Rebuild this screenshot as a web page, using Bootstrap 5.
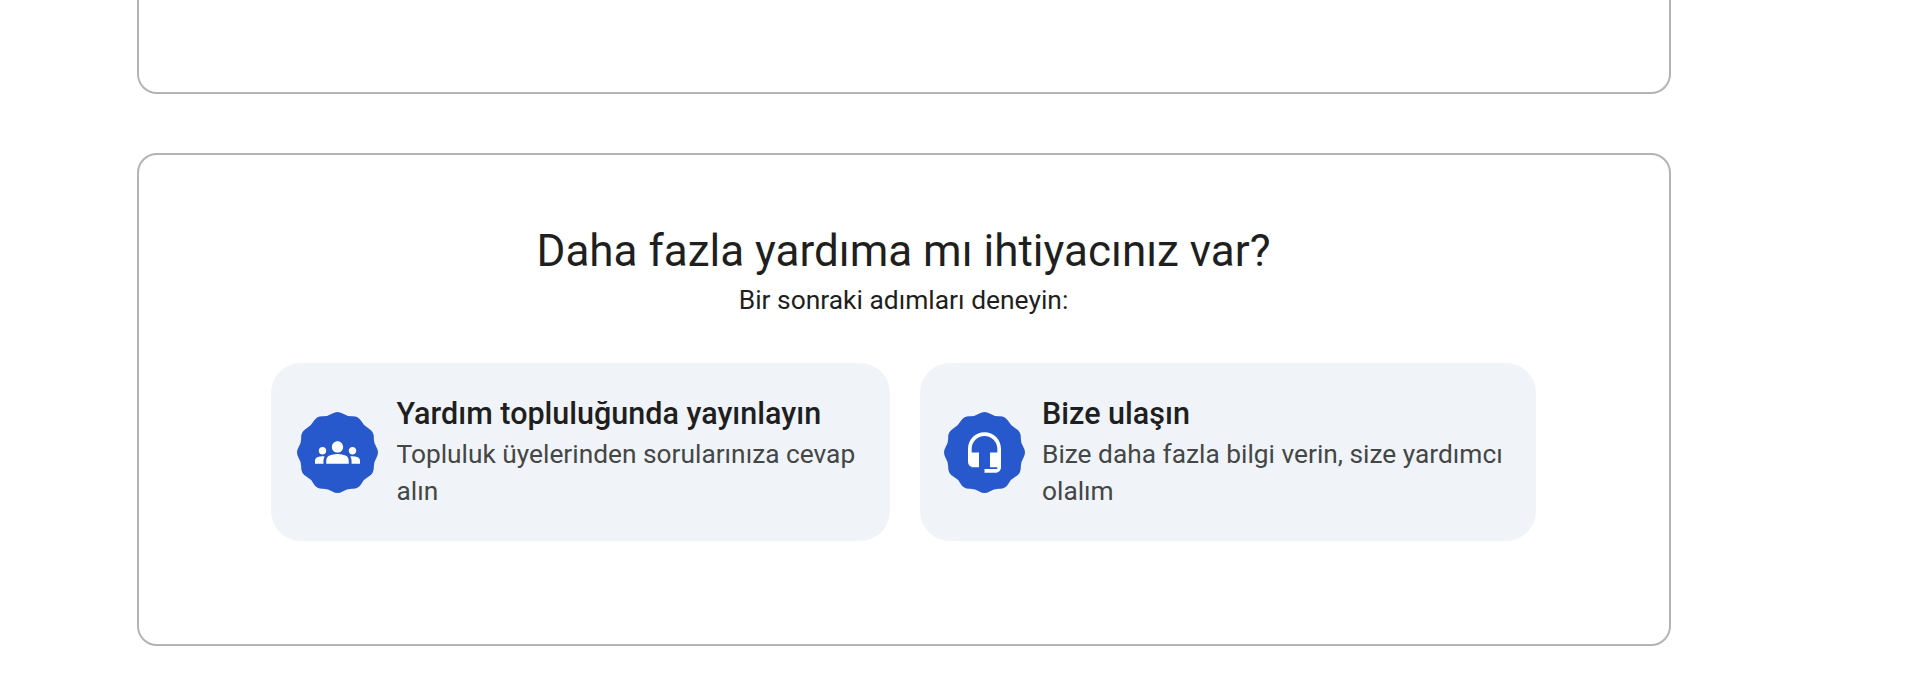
<!DOCTYPE html>
<html lang="tr">
<head>
  <meta charset="UTF-8" />
  <meta name="viewport" content="width=device-width, initial-scale=1" />
  <title>Daha fazla yardıma mı ihtiyacınız var?</title>
  <link href="https://cdn.jsdelivr.net/npm/bootstrap@5.3.0/dist/css/bootstrap.min.css" rel="stylesheet" />
  <style>
    body { background: #fff; font-family: Roboto, "Noto Sans", sans-serif; color: #1f1f1f; overflow: hidden; }
    .page-wrap { width: 1534px; margin-left: 137px; }
    .box-outline { border: 2px solid #b4b4b4; border-radius: 20px; background: #fff; }
    .box-cut { height: 94px; border-top: 0; border-top-left-radius: 0; border-top-right-radius: 0; margin-bottom: 59px; }
    .box-help { height: 493px; padding: 66px 133px 0 132px; }
    .help-title { font-size: 44px; font-weight: 400; line-height: 60px; margin: 0; }
    .help-sub { font-size: 26.4px; font-weight: 400; line-height: 36px; margin: 1px 0 45px; }
    .help-row { gap: 30px; }
    .help-tile { flex: 1 1 0; height: 178px; background: #f0f4f9; border-radius: 30px; padding: 0 20px 0 26px; gap: 18.5px; color: inherit; text-decoration: none; }
    .help-tile-alt { padding-left: 24px; gap: 17.5px; }
    .tile-badge { width: 81px; height: 81px; flex: none; }
    .tile-text { padding-top: 2px; }
    .tile-title { font-size: 30.5px; font-weight: 500; line-height: 36px; margin: 0 0 4px; }
    .tile-desc { font-size: 26.3px; font-weight: 400; line-height: 37px; margin: 0; color: #444746; }
  </style>
</head>
<body>
  <svg width="0" height="0" class="position-absolute">
    <defs>
      <!-- scalloped badge, 12 lobes -->
      <symbol id="badge-shape" viewBox="0 0 81 81">
        <path fill="#2759cd" d="M35.37 1.54Q40.5 -1.5 45.63 1.54Q50.15 4.47 55.54 4.19Q61.5 4.13 64.42 9.32Q66.88 14.12 71.68 16.58Q76.87 19.5 76.81 25.46Q76.53 30.85 79.46 35.37Q82.5 40.5 79.46 45.63Q76.53 50.15 76.81 55.54Q76.87 61.5 71.68 64.42Q66.88 66.88 64.42 71.68Q61.5 76.87 55.54 76.81Q50.15 76.53 45.63 79.46Q40.5 82.5 35.37 79.46Q30.85 76.53 25.46 76.81Q19.5 76.87 16.58 71.68Q14.12 66.88 9.32 64.42Q4.13 61.5 4.19 55.54Q4.47 50.15 1.54 45.63Q-1.5 40.5 1.54 35.37Q4.47 30.85 4.19 25.46Q4.13 19.5 9.32 16.58Q14.12 14.12 16.58 9.32Q19.5 4.13 25.46 4.19Q30.85 4.47 35.37 1.54Z" />
      </symbol>
    </defs>
  </svg>

  <div class="page-wrap">
    <div class="box-outline box-cut"></div>

    <section class="box-outline box-help text-center">
      <h2 class="help-title">Daha fazla yardıma mı ihtiyacınız var?</h2>
      <p class="help-sub">Bir sonraki adımları deneyin:</p>

      <div class="d-flex help-row text-start">
        <!-- Topluluk -->
        <a class="help-tile d-flex align-items-center" href="#">
          <svg class="tile-badge" viewBox="0 0 81 81">
            <use href="#badge-shape" width="81" height="81" />
            <svg x="18" y="18" width="45" height="45" viewBox="0 0 24 24" fill="#fff">
              <path d="M4,13c1.1,0,2-0.9,2-2c0-1.1-0.9-2-2-2s-2,0.9-2,2C2,12.1,2.9,13,4,13z M5.13,14.1C4.76,14.04,4.39,14,4,14c-0.99,0-1.93,0.21-2.78,0.58C0.48,14.9,0,15.62,0,16.43V18l4.5,0v-1.61C4.5,15.56,4.73,14.78,5.13,14.1z M20,13c1.1,0,2-0.9,2-2c0-1.1-0.9-2-2-2s-2,0.9-2,2C18,12.1,18.9,13,20,13z M24,16.43c0-0.81-0.48-1.53-1.22-1.85C21.93,14.21,20.99,14,20,14c-0.39,0-0.76,0.04-1.13,0.1c0.4,0.68,0.63,1.46,0.63,2.29V18l4.5,0V16.43z M16.24,13.65c-1.17-0.52-2.61-0.9-4.24-0.9c-1.63,0-3.07,0.39-4.24,0.9C6.68,14.13,6,15.21,6,16.39V18h12v-1.61C18,15.21,17.32,14.13,16.24,13.65z M12,12c1.66,0,3-1.34,3-3s-1.34-3-3-3S9,7.34,9,9S10.34,12,12,12z" />
            </svg>
          </svg>
          <div class="tile-text">
            <h3 class="tile-title">Yardım topluluğunda yayınlayın</h3>
            <p class="tile-desc">Topluluk üyelerinden sorularınıza cevap alın</p>
          </div>
        </a>

        <!-- Iletisim -->
        <a class="help-tile help-tile-alt d-flex align-items-center" href="#">
          <svg class="tile-badge" viewBox="0 0 81 81">
            <use href="#badge-shape" width="81" height="81" />
            <svg x="18.5" y="18.5" width="44" height="44" viewBox="0 0 24 24" fill="#fff">
              <path d="M12 1c-5 0-9 4-9 9v7c0 1.66 1.34 3 3 3h3v-8H5v-2c0-3.87 3.13-7 7-7s7 3.13 7 7v2h-4v8h4v1h-7v2h6c1.66 0 3-1.34 3-3V10c0-5-4-9-9-9z" />
            </svg>
          </svg>
          <div class="tile-text">
            <h3 class="tile-title">Bize ulaşın</h3>
            <p class="tile-desc">Bize daha fazla bilgi verin, size yardımcı olalım</p>
          </div>
        </a>
      </div>
    </section>
  </div>

  <script src="https://cdn.jsdelivr.net/npm/bootstrap@5.3.0/dist/js/bootstrap.bundle.min.js"></script>
</body>
</html>
